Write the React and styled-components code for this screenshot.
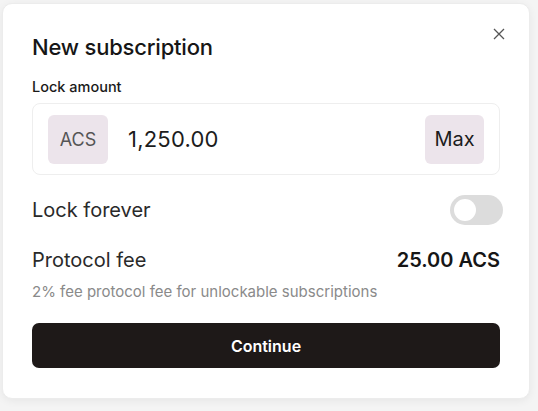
import React from 'react';
import styled, { createGlobalStyle } from 'styled-components';

const Global = createGlobalStyle`
  html, body {
    margin: 0;
    padding: 0;
    background: #f4f4f4;
    font-family: Inter, 'Noto Sans', sans-serif;
  }
`;

const Page = styled.div`
  width: 538px;
  height: 411px;
  padding: 3px 8px 12px 2px;
  box-sizing: border-box;
`;

const Card = styled.div`
  position: relative;
  height: 396px;
  box-sizing: border-box;
  background: #fff;
  border: 1px solid #ececec;
  border-radius: 10px;
  box-shadow: 0 2px 8px rgba(0, 0, 0, 0.06);
  padding: 28px 29px 0 29px;
  display: flex;
  flex-direction: column;
`;

const Close = styled.button`
  position: absolute;
  top: 22px;
  right: 22px;
  width: 16px;
  height: 16px;
  padding: 0;
  border: none;
  background: none;
  color: #555;
  display: flex;
  align-items: center;
  justify-content: center;
`;

const Title = styled.h2`
  margin: 0;
  font-size: 22px;
  font-weight: 500;
  color: #161616;
  letter-spacing: -0.2px;
  line-height: 30px;
`;

const Label = styled.div`
  margin-top: 16px;
  font-size: 14.5px;
  font-weight: 500;
  color: #1a1a1a;
  line-height: 18px;
`;

const InputBox = styled.div`
  margin-top: 7px;
  height: 72px;
  box-sizing: border-box;
  border: 1px solid #eeeeee;
  border-radius: 8px;
  padding: 0 15px;
  display: flex;
  align-items: center;
  gap: 20px;
`;

const Chip = styled.div`
  height: 49px;
  min-width: ${p => p.w}px;
  box-sizing: border-box;
  border-radius: 6px;
  background: #ece4eb;
  color: ${p => p.dark ? '#1c1c1c' : '#555'};
  font-size: ${p => p.size}px;
  display: flex;
  align-items: center;
  justify-content: center;
`;

const Amount = styled.div`
  flex: 1;
  font-size: 22px;
  color: #1c1c1c;
  letter-spacing: 0.2px;
`;

const Row = styled.div`
  margin-top: ${p => p.mt}px;
  display: flex;
  align-items: center;
  justify-content: space-between;
  height: 30px;
`;

const RowText = styled.span`
  font-size: 20px;
  color: ${p => p.strong ? '#161616' : '#2a2a2a'};
  font-weight: ${p => p.strong ? 600 : 400};
`;

const Toggle = styled.div`
  width: 53px;
  height: 30px;
  margin-right: -3px;
  border-radius: 15px;
  background: #dcdcdc;
  padding: 4px;
  box-sizing: border-box;
  display: flex;
  align-items: center;
`;

const Knob = styled.div`
  width: 22px;
  height: 22px;
  border-radius: 50%;
  background: #fff;
`;

const Hint = styled.div`
  margin-top: 7px;
  font-size: 15px;
  color: #8a8a8a;
`;

const Button = styled.button`
  margin-top: 22px;
  height: 45px;
  border: none;
  border-radius: 7px;
  background: #1e1918;
  color: #fff;
  font-family: Inter, 'Noto Sans', sans-serif;
  font-size: 16px;
  font-weight: 600;
`;

export default function App() {
  return (
    <Page>
      <Global />
      <Card>
        <Close aria-label="Close">
          <svg width="12" height="12" viewBox="0 0 12 12" fill="none" stroke="currentColor" strokeWidth="1.3">
            <path d="M1 1l10 10M11 1L1 11" />
          </svg>
        </Close>
        <Title>New subscription</Title>
        <Label>Lock amount</Label>
        <InputBox>
          <Chip w={60} size={18}>ACS</Chip>
          <Amount>1,250.00</Amount>
          <Chip w={59} size={20} dark>Max</Chip>
        </InputBox>
        <Row mt={20}>
          <RowText>Lock forever</RowText>
          <Toggle><Knob /></Toggle>
        </Row>
        <Row mt={20}>
          <RowText>Protocol fee</RowText>
          <RowText strong>25.00 ACS</RowText>
        </Row>
        <Hint>2% fee protocol fee for unlockable subscriptions</Hint>
        <Button>Continue</Button>
      </Card>
    </Page>
  );
}
